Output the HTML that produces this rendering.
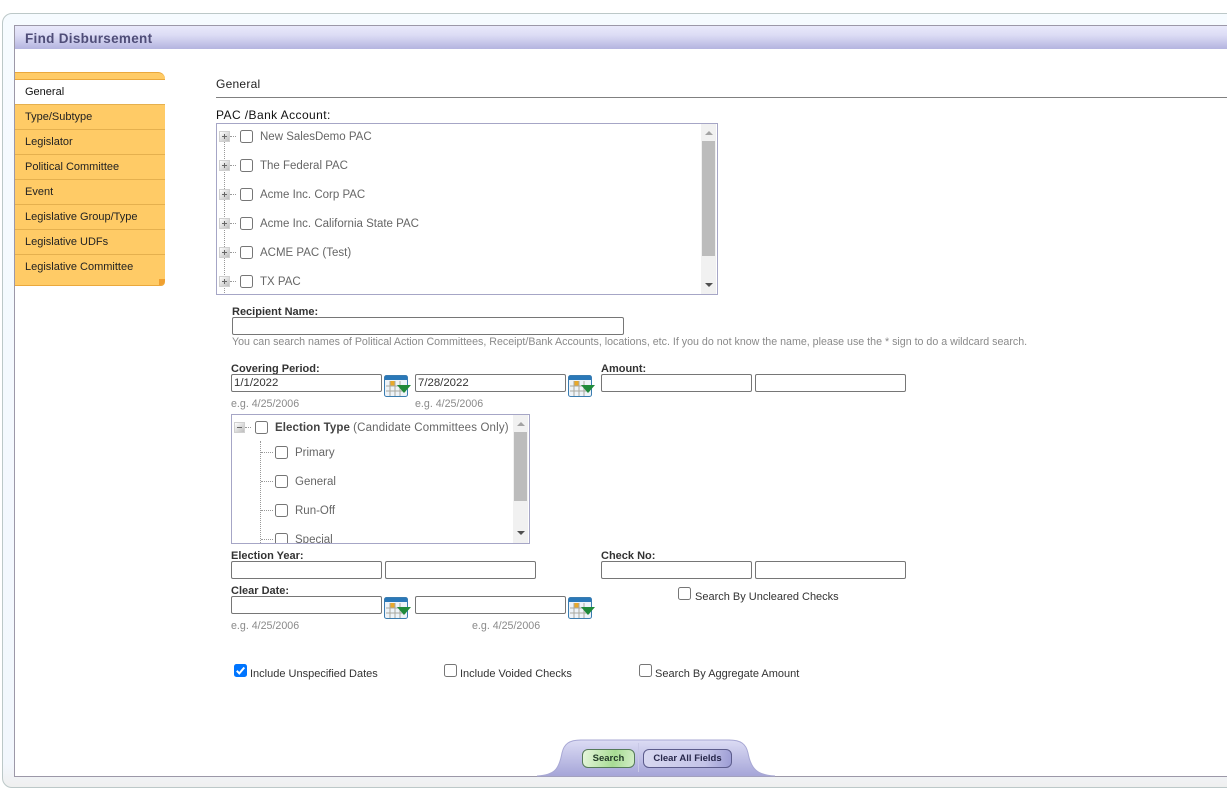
<!DOCTYPE html>
<html><head><meta charset="utf-8"><style>
html,body{margin:0;padding:0;background:#fff;width:1227px;height:799px;overflow:hidden;font-family:"Liberation Sans",sans-serif;}
.a{position:absolute;white-space:nowrap;}
#page{position:relative;width:1227px;height:799px;overflow:hidden;}
.tab{position:absolute;left:15px;width:150px;height:24px;background:#ffcb66;border-bottom:1px solid #e5b04e;font-size:11px;line-height:25px;color:#222;text-indent:10px;}
.lb{font-size:11px;font-weight:bold;color:#333;line-height:12px;}
.in{position:absolute;box-sizing:border-box;height:18px;background:#fff;border:1px solid #767676;border-radius:2px;font-size:11.4px;line-height:17px;padding-left:2px;color:#333;}
.hint{font-size:10.67px;color:#8a8a8a;line-height:12px;}
.cb{position:absolute;box-sizing:border-box;width:13px;height:13px;border:1px solid #767676;border-radius:2.5px;background:#fff;}
.t{font-size:11.5px;color:#666;line-height:15px;}
.chk{font-size:11px;color:#333;line-height:12px;}
.pm{position:absolute;box-sizing:border-box;width:11px;height:11px;border:1px solid #d0d0d0;background:linear-gradient(135deg,#fff,#bdbdbd);}
.pm:before{content:"";position:absolute;left:2px;top:4px;width:5px;height:1px;background:#666;}
.pm.p:after{content:"";position:absolute;left:4px;top:2px;width:1px;height:5px;background:#666;}
.dh{position:absolute;height:0;width:6px;border-top:1px dotted #999;}
.dv{position:absolute;width:0;border-left:1px dotted #999;}
.sb{position:absolute;width:15px;background:#f1f1f1;}
.th{position:absolute;background:#bcbcbc;left:1px;width:13px;}
.up{position:absolute;left:4px;width:0;height:0;border-left:4px solid transparent;border-right:4px solid transparent;border-bottom:4px solid #a3a3a3;}
.dn{position:absolute;left:4px;width:0;height:0;border-left:4px solid transparent;border-right:4px solid transparent;border-top:4px solid #505050;}
</style></head><body><div id="page">

<div class="a" style="left:2px;top:13px;width:1240px;height:775px;box-sizing:border-box;border:1px solid #bcc8c8;border-radius:10px;background:linear-gradient(#f6fbff,#f2f7fd 97%,#efefef);"></div>
<div class="a" style="left:14px;top:25px;width:1230px;height:752px;box-sizing:border-box;border:1px solid #9c98a8;background:#fff;"></div>
<div class="a" style="left:15px;top:26px;width:1212px;height:23px;background:linear-gradient(#e9e9fb,#dcdcf5 40%,#b4b4df);"></div>
<div class="a" style="left:25px;top:31px;font-size:13.5px;line-height:16px;font-weight:bold;color:#4f4d78;letter-spacing:.3px;">Find Disbursement</div>

<!-- tabs -->
<div class="a" style="left:15px;top:72px;width:150px;height:8px;box-sizing:border-box;background:#ffcb66;border-top:1px solid #eaa83c;border-bottom:1px solid #eaa83c;border-top-right-radius:7px;"></div>
<div class="tab" style="top:80px;background:#fff;border-bottom-color:#e5b04e;color:#111;">General</div>
<div class="tab" style="top:105px;">Type/Subtype</div>
<div class="tab" style="top:130px;">Legislator</div>
<div class="tab" style="top:155px;">Political Committee</div>
<div class="tab" style="top:180px;">Event</div>
<div class="tab" style="top:205px;">Legislative Group/Type</div>
<div class="tab" style="top:230px;">Legislative UDFs</div>
<div class="tab" style="top:255px;height:30px;border-bottom:1px solid #eaa83c;border-bottom-right-radius:4px;">Legislative Committee</div>
<div class="a" style="left:159px;top:279px;width:6px;height:6px;background:#f0a030;border-bottom-right-radius:4px;"></div>

<!-- General heading -->
<div class="a" style="left:216px;top:77px;font-size:12px;line-height:14px;color:#222;letter-spacing:.25px;">General</div>
<div class="a" style="left:216px;top:97px;width:1011px;height:1px;background:#808080;"></div>
<div class="a" style="left:216px;top:108px;font-size:12px;line-height:14px;color:#111;letter-spacing:.42px;">PAC /Bank Account:</div>

<!-- PAC tree -->
<div class="a" style="left:216px;top:123px;width:502px;height:172px;box-sizing:border-box;border:1px solid #a6a6c6;background:#fff;overflow:hidden;">
  <div class="dv" style="left:7px;top:18px;height:153px;"></div>
  <div class="pm p" style="left:2px;top:7px;"></div><div class="dh" style="left:13px;top:12px;"></div><div class="cb" style="left:23px;top:6px;"></div><div class="a t" style="left:43px;top:6px;">New SalesDemo PAC</div>
  <div class="pm p" style="left:2px;top:36px;"></div><div class="dh" style="left:13px;top:41px;"></div><div class="cb" style="left:23px;top:35px;"></div><div class="a t" style="left:43px;top:35px;">The Federal PAC</div>
  <div class="pm p" style="left:2px;top:65px;"></div><div class="dh" style="left:13px;top:70px;"></div><div class="cb" style="left:23px;top:64px;"></div><div class="a t" style="left:43px;top:64px;">Acme Inc. Corp PAC</div>
  <div class="pm p" style="left:2px;top:94px;"></div><div class="dh" style="left:13px;top:99px;"></div><div class="cb" style="left:23px;top:93px;"></div><div class="a t" style="left:43px;top:93px;">Acme Inc. California State PAC</div>
  <div class="pm p" style="left:2px;top:123px;"></div><div class="dh" style="left:13px;top:128px;"></div><div class="cb" style="left:23px;top:122px;"></div><div class="a t" style="left:43px;top:122px;">ACME PAC (Test)</div>
  <div class="pm p" style="left:2px;top:152px;"></div><div class="dh" style="left:13px;top:157px;"></div><div class="cb" style="left:23px;top:151px;"></div><div class="a t" style="left:43px;top:151px;">TX PAC</div>
  <div class="sb" style="left:484px;top:0;height:170px;">
    <div class="up" style="top:7px;"></div>
    <div class="th" style="top:17px;height:115px;"></div>
    <div class="dn" style="top:159px;"></div>
  </div>
</div>

<!-- Recipient -->
<div class="a lb" style="left:232px;top:306px;">Recipient Name:</div>
<div class="in" style="left:232px;top:317px;width:392px;"></div>
<div class="a hint" style="left:232px;top:336px;">You can search names of Political Action Committees, Receipt/Bank Accounts, locations, etc. If you do not know the name, please use the * sign to do a wildcard search.</div>

<!-- Covering Period -->
<div class="a lb" style="left:231px;top:363px;">Covering Period:</div>
<div class="a lb" style="left:601px;top:363px;">Amount:</div>
<div class="in" style="left:231px;top:374px;width:151px;">1/1/2022</div>
<div class="in" style="left:415px;top:374px;width:151px;">7/28/2022</div>
<div class="in" style="left:601px;top:374px;width:151px;"></div>
<div class="in" style="left:755px;top:374px;width:151px;"></div>
<svg class="a" style="left:384px;top:375px;" width="28" height="22" viewBox="0 0 28 22"><rect x=".5" y=".5" width="23" height="21" rx="2" fill="#eef3f8" stroke="#3a7cb0"/><rect x="1" y="1" width="22" height="4" fill="#2a78b8"/><rect x="6" y="6" width="5" height="5" fill="#e8a92c"/><path d="M6 6V21M11 6V21M16 6V21M2 11H22M2 16H22" stroke="#a8a8a0" fill="none"/><path d="M13 10H27L20 18Z" fill="#1f8a3a"/></svg>
<svg class="a" style="left:568px;top:375px;" width="28" height="22" viewBox="0 0 28 22"><rect x=".5" y=".5" width="23" height="21" rx="2" fill="#eef3f8" stroke="#3a7cb0"/><rect x="1" y="1" width="22" height="4" fill="#2a78b8"/><rect x="6" y="6" width="5" height="5" fill="#e8a92c"/><path d="M6 6V21M11 6V21M16 6V21M2 11H22M2 16H22" stroke="#a8a8a0" fill="none"/><path d="M13 10H27L20 18Z" fill="#1f8a3a"/></svg>
<div class="a hint" style="left:231px;top:398px;">e.g. 4/25/2006</div>
<div class="a hint" style="left:415px;top:398px;">e.g. 4/25/2006</div>

<!-- Election tree -->
<div class="a" style="left:231px;top:414px;width:299px;height:130px;box-sizing:border-box;border:1px solid #a6a6c6;background:#fff;overflow:hidden;">
  <div class="pm" style="left:2px;top:7px;"></div><div class="dh" style="left:13px;top:12px;"></div><div class="cb" style="left:23px;top:6px;"></div>
  <div class="a t" style="left:43px;top:6px;"><b style="color:#444;letter-spacing:.08px;">Election Type</b> <span style="letter-spacing:.15px;">(Candidate Committees Only)</span></div>
  <div class="dv" style="left:28px;top:26px;height:104px;"></div>
  <div class="dh" style="left:29px;top:37px;width:12px;"></div><div class="cb" style="left:43px;top:31px;"></div><div class="a t" style="left:63px;top:31px;">Primary</div>
  <div class="dh" style="left:29px;top:66px;width:12px;"></div><div class="cb" style="left:43px;top:60px;"></div><div class="a t" style="left:63px;top:60px;">General</div>
  <div class="dh" style="left:29px;top:95px;width:12px;"></div><div class="cb" style="left:43px;top:89px;"></div><div class="a t" style="left:63px;top:89px;">Run-Off</div>
  <div class="dh" style="left:29px;top:124px;width:12px;"></div><div class="cb" style="left:43px;top:118px;"></div><div class="a t" style="left:63px;top:118px;">Special</div>
  <div class="sb" style="left:281px;top:0;height:128px;">
    <div class="up" style="top:7px;"></div>
    <div class="th" style="top:17px;height:69px;"></div>
    <div class="dn" style="top:116px;"></div>
  </div>
</div>

<!-- Election year / check -->
<div class="a lb" style="left:231px;top:550px;">Election Year:</div>
<div class="a lb" style="left:601px;top:550px;">Check No:</div>
<div class="in" style="left:231px;top:561px;width:151px;"></div>
<div class="in" style="left:385px;top:561px;width:151px;"></div>
<div class="in" style="left:601px;top:561px;width:151px;"></div>
<div class="in" style="left:755px;top:561px;width:151px;"></div>

<!-- Clear date -->
<div class="a lb" style="left:231px;top:585px;">Clear Date:</div>
<div class="in" style="left:231px;top:596px;width:151px;"></div>
<div class="in" style="left:415px;top:596px;width:151px;"></div>
<svg class="a" style="left:384px;top:597px;" width="28" height="22" viewBox="0 0 28 22"><rect x=".5" y=".5" width="23" height="21" rx="2" fill="#eef3f8" stroke="#3a7cb0"/><rect x="1" y="1" width="22" height="4" fill="#2a78b8"/><rect x="6" y="6" width="5" height="5" fill="#e8a92c"/><path d="M6 6V21M11 6V21M16 6V21M2 11H22M2 16H22" stroke="#a8a8a0" fill="none"/><path d="M13 10H27L20 18Z" fill="#1f8a3a"/></svg>
<svg class="a" style="left:568px;top:597px;" width="28" height="22" viewBox="0 0 28 22"><rect x=".5" y=".5" width="23" height="21" rx="2" fill="#eef3f8" stroke="#3a7cb0"/><rect x="1" y="1" width="22" height="4" fill="#2a78b8"/><rect x="6" y="6" width="5" height="5" fill="#e8a92c"/><path d="M6 6V21M11 6V21M16 6V21M2 11H22M2 16H22" stroke="#a8a8a0" fill="none"/><path d="M13 10H27L20 18Z" fill="#1f8a3a"/></svg>
<div class="cb" style="left:678px;top:587px;"></div>
<div class="a chk" style="left:695px;top:591px;">Search By Uncleared Checks</div>
<div class="a hint" style="left:231px;top:620px;">e.g. 4/25/2006</div>
<div class="a hint" style="left:472px;top:620px;">e.g. 4/25/2006</div>

<!-- bottom checks -->
<svg class="a" style="left:234px;top:664px;" width="13" height="13" viewBox="0 0 13 13"><rect width="13" height="13" rx="2.500" fill="#0075ff"/><path d="M2.800 6.800L5.300 9.400L10.300 3.500" fill="none" stroke="#fff" stroke-width="2"/></svg>
<div class="a chk" style="left:250px;top:668px;">Include Unspecified Dates</div>
<div class="cb" style="left:444px;top:664px;"></div>
<div class="a chk" style="left:460px;top:668px;">Include Voided Checks</div>
<div class="cb" style="left:639px;top:664px;"></div>
<div class="a chk" style="left:655px;top:668px;">Search By Aggregate Amount</div>

<!-- button bar -->
<svg class="a" style="left:535px;top:739px;" width="245" height="38" viewBox="0 0 245 38"><defs><linearGradient id="g" x1="0" y1="0" x2="0" y2="1"><stop offset="0" stop-color="#dcdcf4"/><stop offset="1" stop-color="#a5a5d8"/></linearGradient></defs><path d="M2 37C20 36 24 30 27 14C29 5 34 1 46 1H194C206 1 211 5 213 14C216 30 222 36 240 37Z" fill="url(#g)" stroke="#a8a8d4"/></svg>
<div class="a" style="left:638px;top:743px;width:1px;height:29px;background:#c8c8e6;"></div>
<div class="a" style="left:582px;top:749px;width:53px;height:19px;box-sizing:border-box;border:1px solid #557a5a;border-radius:6px;background:linear-gradient(100deg,#e6f6dc,#a8dc94 60%,#d4eec8);font-size:9.500px;font-weight:bold;color:#223a28;text-align:center;line-height:17px;">Search</div>
<div class="a" style="left:643px;top:749px;width:89px;height:19px;box-sizing:border-box;border:1px solid #5c5c8c;border-radius:6px;background:linear-gradient(100deg,#d8d8f0,#c4c4e8 70%,#9c9cd4);font-size:9.500px;font-weight:bold;color:#26264a;text-align:center;line-height:17px;">Clear All Fields</div>

</div></body></html>
